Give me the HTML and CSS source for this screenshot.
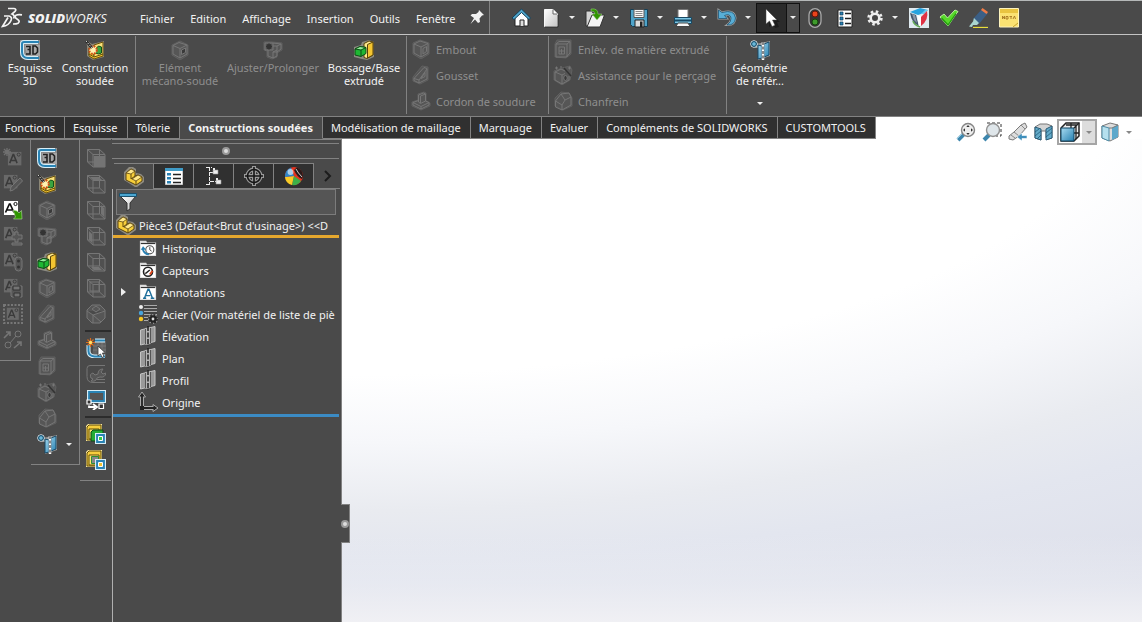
FILE: index.html
```html
<!DOCTYPE html>
<html lang="fr">
<head>
<meta charset="utf-8">
<title>SOLIDWORKS</title>
<meta name="viewport" content="width=device-width, initial-scale=1">
<link rel="stylesheet" href="styles.css">
</head>
<body>
<svg class="sprite" aria-hidden="true">
  <defs>
    <linearGradient id="g-blue" x1="0" y1="0" x2="1" y2="1"><stop offset="0" stop-color="#a9dcf2"/><stop offset="1" stop-color="#2680b0"/></linearGradient>
    <linearGradient id="g-grey" x1="0" y1="0" x2="1" y2="1"><stop offset="0" stop-color="#fff"/><stop offset="1" stop-color="#c4c4c4"/></linearGradient>
  </defs>
  <symbol id="i-sk3d" viewBox="0 0 20 20"><path d="M0 0h20v20H6L0 14z" fill="#8c8c8c"/><path d="M18 2H4q-2 0-2 2v8q0 6 6 6h10" fill="none" stroke="#d8eef7" stroke-width="4"/><path d="M19 2H4q-2 0-2 2v8q0 6 6 6h11" fill="none" stroke="#2a84b5" stroke-width="2"/><path d="M5 5h15v11H7z" fill="#a5a5a5"/><path d="M6 6.5h4v3H7.500M10 9.500v4.500H6M13 6v8h2.500l2-2V8l-2-2z" fill="none" stroke="#222" stroke-width="1.600"/></symbol>
  <symbol id="i-weld" viewBox="0 0 20 20"><path d="M1 0l6 4 12-3v16l-11 3-6-4V6z" fill="#8b8777"/><path d="M4 8l5 2v8l-5-3z" fill="#f4d23c" stroke="#5d4708"/><path d="M9 5l9-3v12l-9 4z" fill="#fbe27a" stroke="#6b520b"/><path d="M9 17l9-3v2l-9 3-5-3v-2z" fill="#f2c431" stroke="#6b520b"/><path d="M10.500 13V9l3-3 3 1v6l-3 1z" fill="#3ba53f" stroke="#12511a"/><circle cx="8" cy="10" r="3.800" fill="#fff3b0" stroke="#cf4c15" stroke-width="2" stroke-dasharray="1.800 1.200"/><path d="M1 1l6 7" stroke="#222" stroke-width="2.600"/><path d="M1 1l6 7" stroke="#ddd" stroke-dasharray="1.500 1"/></symbol>
  <symbol id="i-member" viewBox="0 0 20 20"><path d="M10 1l8 4v10l-8 5-8-5V5z" class="df dh"/><path d="M3 5.500l6-3 8 2.500v9l-7 4-7-4zM3 5.500l7 3 7-3.500M10 8.500V18" class="dl"/><path d="M11.500 10l4-2v4.500l-4 2z" class="dk"/></symbol>
  <symbol id="i-trim" viewBox="0 0 20 20"><path d="M1 2h8l10 1v7l-5 3v4l-5 2-5-2v-6L1 10z" class="df dh"/><path d="M2 3h8v7H2zM10 3l8 1v5l-4 3h-4M14 6l4-2M10 6h4v6M5 10v6l5 2v-6M10 18l4-2v-4M10 12l4-2" class="dl"/><path d="M4 4.500l4 4M8 4.500l-4 4M6 3.500v6M3 6.500h6" class="dk2"/></symbol>
  <symbol id="i-extrude" viewBox="0 0 20 20"><path d="M8 2l7-2 5 2v15l-7 3-5-1-8-2V7l7-2z" fill="#8b8a80"/><path d="M10 3.500l5-2.500 4 1v13l-6 3.500-3-1z" fill="#ffe98c" stroke="#58430a"/><path d="M13.500 4.500L19 2v13l-5.500 3z" fill="#f4c531" stroke="#58430a"/><path d="M1 9l5-2.500 6 1v6l-5 3-6-1.500z" fill="#1fb733" stroke="#0c4d14"/><path d="M1 9l5-2.500 6 1L7 10z" fill="#91f09a" stroke="#0c4d14"/><path d="M7 10v6" stroke="#0c4d14"/></symbol>
  <symbol id="i-endcap" viewBox="0 0 20 20"><path d="M9 1l9 3v11l-8 5-8-5V4z" class="df dh"/><path d="M3 5l6-3 8 2.500v9.500l-7 4-7-4zM3 5l7 3 7-3.500M10 8v10M12 9.500l3.500-2v5l-3.500 2.500z" class="dl"/></symbol>
  <symbol id="i-gusset" viewBox="0 0 20 20"><path d="M11 1l6 1v13l-8 4-7-3v-4z" class="df dh"/><path d="M13 2.500L3 13.500v2l5 2.500 8-4V3.500zM8 18v-3l8-11M3 13.500l5 1.500M10 13.500l4-6v4z" class="dl"/></symbol>
  <symbol id="i-bead" viewBox="0 0 20 20"><path d="M7 3l6-2 2 1v8l4 2v3l-9 4-9-4v-4l6-2z" class="df dh"/><path d="M7.500 4l5-2 2 1v7l-5 2.500-2-1.500zM9.500 5l5-2M9.500 5v7M7.500 9.500L2 11.500V14l8 4 8-4v-2.500l-3.500-1.500M2 11.500l8 4 8-4M10 15.500V18" class="dl"/></symbol>
  <symbol id="i-cut" viewBox="0 0 20 20"><path d="M4 1h14v14l-5 4-11-1V5z" class="df dh"/><path d="M3 5l3-2.500h11V14l-3.500 4H3zM3 5h11v13M14 5l3-2.500M6 8h5.500v7H6zM8.500 10v5M6 12h5" class="dl"/></symbol>
  <symbol id="i-hole" viewBox="0 0 20 20"><path d="M9 3l8-2 2 4-2 10-8 5-8-5V6z" class="df dh"/><path d="M2 7l6-3 4 2M2 7v8l7 4 7-4v-4M2 7l7 3v9M9 10l3-1.500" class="dl"/><ellipse cx="12.500" cy="13" rx="1.800" ry="2.500" class="dk"/><path d="M11 3l7 8" class="dk2"/><path d="M2 3h3M3.500 1.500v3M7 2h2M15 3h3M16.500 1.500v3" class="dl"/></symbol>
  <symbol id="i-chamfer" viewBox="0 0 20 20"><path d="M8 1l8 1 3 5v8l-9 4-8-4V7z" class="df dh"/><path d="M2.500 10L8 3l8-1 2 4-6 3-3 5v5l-6.500-3zM9 14l-6.500-4M12 9L8 3M18 6v8l-9 5" class="dl"/></symbol>
  <symbol id="i-geom" viewBox="0 0 20 20"><path d="M6 4l14-3v15L8 20V8L5 8z" fill="#9a9a9a"/><circle cx="4" cy="4" r="3.300" fill="#56a9cf" stroke="#d8d8d8"/><circle cx="4" cy="4" r="2.400" fill="#6bb9da" stroke="#11435f"/><path d="M8 5l4 1v12l-4 1zM14 4l5-2v13l-5 2z" fill="url(#g-blue)" stroke="#174966"/><path d="M13 2v18" stroke="#fff" stroke-width="2.500"/><path d="M13 2v18" stroke="#111" stroke-dasharray="3 1.500"/></symbol>

  <symbol id="i-logo" viewBox="0 0 22 22"><g fill="none" stroke="#f4f4f4" stroke-width="1.700"><path d="M7 1.500h6q3 .5 1 3L11 7q3.500 1.500 1.500 4.500"/><path d="M3 9h5q3.500 1 2 4.500Q8 18.500 1.500 19.500L7 10.500"/><path d="M21 7.800q-6.500-.8-7 1.700 0 1.500 2.700 3 2.800 2 .3 3.700-1.500.8-5 .8"/></g></symbol>
  <symbol id="i-pin" viewBox="0 0 16 16"><path d="M10 1l5 5-2 .5-2.500 3L11 13l-2 1-3-3.500-4.500 4.500L5 9 1.500 6.500 3 5h4l2.500-2z" fill="#f2f2f2"/></symbol>
  <symbol id="i-home" viewBox="0 0 20 20"><path d="M4 9v9h13V9l-6.500-6z" fill="#fff" stroke="#222"/><path d="M10.500 1L1 10l2 1.500 7.500-7 7.500 7 1.500-1.500z" fill="#52a8ce" stroke="#143f58"/><path d="M9 18v-6h4v6" fill="#ddd" stroke="#222"/></symbol>
  <symbol id="i-new" viewBox="0 0 16 20"><path d="M1.500 1.500h8.500l4.500 4.500v12.500h-13z" fill="url(#g-grey)" stroke="#f8f8f8"/><path d="M10 1.500V6h4.500" fill="#fff" stroke="#666"/><path d="M2 19h13V7" fill="none" stroke="#2b2b2b"/></symbol>
  <symbol id="i-open" viewBox="0 0 20 20"><path d="M1 3h6l1 2h5v4L4 18H1z" fill="#d4d4d4" stroke="#333"/><path d="M7 7h12.500l-4.500 12H2z" fill="#f3f3f3" stroke="#333"/><path d="M6 1q7-1 7 5h4l-5 6-5-6h3q0-3-4-3z" fill="#319400" stroke="#a5cf90" stroke-width=".5"/></symbol>
  <symbol id="i-save" viewBox="0 0 20 20"><path d="M1.500 1.500h17v17h-15l-2-2z" fill="#4fa3c9" stroke="#163f55"/><path d="M5 1.500h10v8H5z" fill="#f8f8f8" stroke="#555"/><path d="M6.500 3.500h7M6.500 5.500h7M6.500 7.500h7" stroke="#888"/><path d="M6 12h9v7H6z" fill="#dcdcdc" stroke="#222"/><path d="M11 13.500h2.500V19H11z" fill="#222"/></symbol>
  <symbol id="i-print" viewBox="0 0 20 20"><path d="M5 1.500h10V10H5z" fill="#fff" stroke="#777"/><path d="M1.500 9.500h17v6h-17z" fill="#7bc4e2" stroke="#174863"/><path d="M2 12.500h16" stroke="#174863" stroke-width="2"/><path d="M5 15l-2 3.500h14L15 15z" fill="#f8f8f8" stroke="#444"/></symbol>
  <symbol id="i-undo" viewBox="0 0 20 20"><path d="M1.500 2v8.500H10L7.500 7.500Q13 5 14 10q.5 4-4 7 8 .5 8.500-7Q17.500 1 5 4.500z" fill="#3b9acb" stroke="#a5a5a5" stroke-width="2"/><path d="M1.500 2v8.500H10L7.500 7.500Q13 5 14 10q.5 4-4 7 8 .5 8.500-7Q17.500 1 5 4.500z" fill="#58aed6" stroke="#1d5575" stroke-width=".8"/></symbol>
  <symbol id="i-cursor" viewBox="0 0 16 20"><path d="M5 4v15l4-3 2 4 4-1-2-5h3z" fill="#000" opacity=".35"/><path d="M2 1v15l3.500-3 2.500 5.500 3-1.300L8.500 12H13z" fill="#fff" stroke="#444" stroke-width=".5"/></symbol>
  <symbol id="i-traffic" viewBox="0 0 14 20"><rect x="1" y=".7" width="12" height="18.600" rx="6" fill="#333" stroke="#aaa" stroke-width="1.300"/><circle cx="7" cy="6" r="3" fill="#e8431c" stroke="#6a1305"/><circle cx="7" cy="14" r="3" fill="#3f9b2c" stroke="#12450a"/></symbol>
  <symbol id="i-list" viewBox="0 0 16 20"><path d="M1 2h14v17H1z" fill="#fff" stroke="#222"/><path d="M3 4h3v3H3zM3 9h3v3H3zM3 14h3v3H3z" fill="#2980b3" stroke="#113d5a" stroke-width=".7"/><path d="M8 5.500h6M8 10.500h6M8 15.500h6" stroke="#222" stroke-width="1.300"/></symbol>
  <symbol id="i-gear" viewBox="0 0 18 18"><circle cx="9" cy="9" r="6.400" fill="none" stroke="#eee" stroke-width="2.600" stroke-dasharray="2.500 2.526"/><circle cx="9" cy="9" r="4.300" fill="#444" stroke="#eee" stroke-width="2.600"/></symbol>
  <symbol id="i-color" viewBox="0 0 20 20"><path d="M0 0h20v20H0z" fill="#dfeaf0"/><path d="M1 4l10-4 8 2-7 4-3 1z" fill="#27a3df"/><path d="M12 6l4-4 3 0-4 4z" fill="#6cc6ee"/><path d="M1 5l6 2q1 5 3 11-7-2-9-13z" fill="#44566c"/><path d="M3 6l3 1 2 8-3-3z" fill="#8b97a6"/><path d="M12 9l6-6q2 9-6 15z" fill="#df3245"/><path d="M8 7l4 1v9l-2 2z" fill="#fff"/><path d="M4 13q1 4 7 6" stroke="#64a955" stroke-width="1.600" fill="none"/></symbol>
  <symbol id="i-check" viewBox="0 0 20 20"><path d="M1 9l4-3 3.500 4L16 2l3 1.500-3 4L9 18z" fill="#57d92a" stroke="#b9ef9f"/><path d="M2.500 10l6.500 7 8-11.500" stroke="#239b0d" stroke-width="1.300" fill="none"/></symbol>
  <symbol id="i-pen" viewBox="0 0 20 20"><path d="M13 1l6 4-9 11-6-5z" fill="#3b5f86"/><path d="M13.500 0l5.500 4-1.500 2L12 2z" fill="#f07b45"/><path d="M5 10l5 5-2 2H4l-1 2-3-.5 4-5z" fill="#a9d5d0"/><path d="M4 19.500h15" stroke="#e8dd3b" stroke-width="1.300"/></symbol>
  <symbol id="i-note" viewBox="0 0 20 20"><path d="M.5.500h19V19H.5z" fill="#fbe272" stroke="#fdf3bd"/><path d="M1 1h18v4H1z" fill="#e9c440"/><path d="M3.500 11V8l2 3V8M7 8.500h2V11H7zM10.500 8.500h2.500M12 8.500V11M14 11l1.500-3 1 3" fill="none" stroke="#a57621" stroke-width=".9"/><path d="M14 19l5-4" stroke="#c5a12a"/></symbol>

  <symbol id="p-note" viewBox="0 0 20 20"><path d="M1 1h15v15H1z" fill="#696969"/><path d="M3 13.500L6.800 4h.6l3.800 9.500M4.500 10.500h5" fill="none" stroke="#3a3a3a" stroke-width="1.700"/><circle cx="13" cy="4" r="1.700" fill="none" stroke="#3a3a3a"/></symbol>
  <symbol id="i-n-new" viewBox="0 0 20 20"><use href="#p-note" x="4" y="3" width="18" height="18"/><path d="M4 0v8M0 4h8M1 1l6 6M7 1L1 7" stroke="#707070" stroke-width="1.300"/></symbol>
  <symbol id="i-n-edit" viewBox="0 0 20 20"><use href="#p-note" width="18" height="18"/><path d="M7 17l1-4 9-9 2.500 3-9 9z" class="df dl2"/></symbol>
  <symbol id="i-n-insert" viewBox="0 0 20 20"><path d="M1 1h14v14H1z" fill="#fff"/><path d="M2.500 12.500L6.400 4h.7l3.900 8.500M4 10h5" fill="none" stroke="#111" stroke-width="1.700"/><circle cx="12.500" cy="4" r="1.600" fill="none" stroke="#111"/><path d="M10 10l4 1 2 2 2.500-2.500.5 8.500h-8.500l2-2z" fill="#2f9500" stroke="#b2d99d" stroke-width=".6"/></symbol>
  <symbol id="i-n-plus" viewBox="0 0 20 20"><use href="#p-note" width="18" height="18"/><path d="M12 6h3v3h4v4h-4v3h-3v-3H9V9h3zM9 17h10v2H9z" class="df dl2"/></symbol>
  <symbol id="i-n-link" viewBox="0 0 20 20"><use href="#p-note" width="18" height="18"/><rect x="12" y="5" width="7" height="14" rx="3.500" class="df dl2"/><circle cx="15.500" cy="9" r="1.500" fill="#333"/><circle cx="15.500" cy="15" r="1.500" fill="#333"/></symbol>
  <symbol id="i-n-save" viewBox="0 0 20 20"><use href="#p-note" width="18" height="18"/><path d="M8 8h11v11H9l-1-1z" class="df dl2"/><path d="M10 8h7v4h-7zM11 15h6v4h-6z" fill="#737373" stroke="#333"/></symbol>
  <symbol id="i-n-frame" viewBox="0 0 20 20"><path d="M1 1h18v18H1z" fill="none" stroke="#777" stroke-dasharray="2 1.500" stroke-width="2"/><use href="#p-note" x="3" y="3" width="16" height="16"/></symbol>
  <symbol id="i-balloon" viewBox="0 0 20 20"><g class="dl"><path d="M1 8l6-6M3 2h4v4M11 18l7-6M18 16v-4h-4" stroke-width="1.600"/><circle cx="15" cy="4" r="3"/><circle cx="5" cy="15" r="3"/><path d="M13 6l-6 7"/></g></symbol>

  <symbol id="p-cube" viewBox="0 0 20 20"><path d="M1 1h13l5 5v13H7l-6-5z" fill="#505050"/><path d="M1.500 1.500h12l5.500 5v12.500H7l-5.500-5zM1.500 1.500l5.500 5h12M7 6.500v12.500M13.500 1.500v12.500M1.500 14h12l5.500 5" class="dl"/></symbol>
  <symbol id="i-c1" viewBox="0 0 20 20"><use href="#p-cube"/><path d="M8 8h11v11H8z" fill="#747474"/></symbol>
  <symbol id="i-c2" viewBox="0 0 20 20"><use href="#p-cube"/><path d="M4 3h9l3 3H7z" fill="#747474"/></symbol>
  <symbol id="i-c3" viewBox="0 0 20 20"><use href="#p-cube"/><path d="M15 5l3 3v9l-3-3z" fill="#747474"/></symbol>
  <symbol id="i-c4" viewBox="0 0 20 20"><use href="#p-cube"/><path d="M3 5l3 3v9l-3-3z" fill="#747474"/></symbol>
  <symbol id="i-c5" viewBox="0 0 20 20"><use href="#p-cube"/><path d="M5 15h8l3 3H8z" fill="#747474"/></symbol>
  <symbol id="i-c6" viewBox="0 0 20 20"><use href="#p-cube"/><path d="M4 4h9v9H4z" fill="none" stroke="#747474"/></symbol>
  <symbol id="i-c7" viewBox="0 0 20 20"><path d="M6 1h8l5 5v8l-5 5H6l-5-5V6zM1 7l6 4 12-4M7 11v8M7 11l8 7M6 5l4-3 4 3-4 3z" class="df dl2"/></symbol>
  <symbol id="i-sk-cur" viewBox="0 0 20 20"><path d="M8 3h12v16H6z" fill="#626262"/><path d="M12 3v15M16 3v15M7 8h13M7 12h13" stroke="#777"/><path d="M9 2.500h10M2.500 7v6q0 5 6 5.500H19" fill="none" stroke="#d8eef7" stroke-width="4"/><path d="M9 2.500h10M2.500 7v6q0 5 6 5.500H19" fill="none" stroke="#2a84b5" stroke-width="2"/><path d="M4.500 0v9M0 4.500h9M1.500 1.500l6 6M7.500 1.500l-6 6" stroke="#d96b1c" stroke-width="1.200"/><circle cx="4.500" cy="4.500" r="1.700" fill="#ffe36b"/><path d="M12 8v10l2.500-2 1.500 3.500 2-1-1.500-3.500h3z" fill="#fff" stroke="#333" stroke-width=".8"/></symbol>
  <symbol id="i-wrench" viewBox="0 0 20 20"><path d="M19 1.500H4q-3 0-3 3v8q0 6 6 6h12M19 15.500H8" class="dl"/><path d="M5 14q-2-4 2-5l2 2 3-1q0-5 5-5l-2 3 2 2 3-1q-1 5-6 4l-3 1q-1 4-6 3l2-2z" class="df dl2"/></symbol>
  <symbol id="i-rect" viewBox="0 0 20 20"><path d="M2 1h17v11H2z" fill="#555" stroke="#d8eef7" stroke-width="2"/><path d="M3 2h15v9H3z" fill="none" stroke="#2a84b5" stroke-width="1.800"/><path d="M1 10h4v4H1zM13 14h4.500v4.500H13z" fill="#333" stroke="#fff" stroke-width="1.200"/><path d="M3 15.500V17h6M7 14l4 3-4 3" fill="none" stroke="#fff" stroke-width="1.800"/></symbol>
  <symbol id="p-off" viewBox="0 0 20 20"><path d="M0 2l2-2h14v15l-2 2H0z" fill="#f9e69a"/><path d="M1 3l2-2h12v12l-2 3H1z" fill="#f6ce3d" stroke="#5e4a0a"/><path d="M3 5h10v10H3z" fill="#ffe674" stroke="#5e4a0a"/></symbol>
  <symbol id="p-sq" viewBox="0 0 10 10"><path d="M.5.500h9v9h-9z" fill="#2a84b5" stroke="#d8eef7"/></symbol>
  <symbol id="i-off1" viewBox="0 0 20 20"><use href="#p-off"/><path d="M5 8l2-2h10v9l-2 2H5z" fill="#23ad35" stroke="#0d4a15"/><use href="#p-sq" x="9" y="9" width="11" height="11"/><path d="M12.500 12.500h4v4h-4z" fill="#37cc45" stroke="#fff"/></symbol>
  <symbol id="i-off2" viewBox="0 0 20 20"><use href="#p-off"/><path d="M5.500 6.500h7v7h-7z" fill="#888" stroke="#2c8f35"/><use href="#p-sq" x="9" y="9" width="11" height="11"/><path d="M12.500 12.500h4v4h-4z" fill="#f2c431" stroke="#fff"/></symbol>

  <symbol id="i-part" viewBox="0 0 20 20"><path d="M5 0h4l3 2v4l5 1 3 3v5l-7 5h-2L0 13V5z" fill="#8f8b80"/><path d="M2 6l5-4 4 2v5l3-1 4 2v4l-6 4-10-5z" fill="#f8cf3b" stroke="#5c4611"/><path d="M2 6l5-4 4 2-4 3zM8 12l6-4 4 2-6 4z" fill="#ffe88a" stroke="#5c4611" stroke-width=".8"/><path d="M7 7v5l4-3M12 14v4" stroke="#5c4611" fill="none"/></symbol>
  <symbol id="i-props" viewBox="0 0 20 20"><path d="M1.500 2.500h17v16h-17z" fill="#fff" stroke="#ccc"/><path d="M1 2h18v3H1z" fill="#3f9bc7"/><path d="M3 7h4v2.500H3zM3 11h4v2.500H3zM3 15h4v2.500H3z" fill="#2980b3"/><path d="M9 8.500h8M9 12.500h8M9 16.500h8" stroke="#222" stroke-width="1.500"/></symbol>
  <symbol id="i-config" viewBox="0 0 20 20"><path d="M5.500 1v18M6 6.500h4M6 15.500h7M2 1.500h6M2 18.500h4" stroke="#eee" stroke-dasharray="4 1" fill="none"/><path d="M9 4h5v4H9zM12 14h5v4h-5z" fill="#eee" stroke="#999" stroke-width=".6"/><path d="M9 2h2v2H9zM12 12h2v2h-2z" fill="#eee"/></symbol>
  <symbol id="i-target" viewBox="0 0 20 20"><circle cx="10" cy="10" r="6.500" fill="none" stroke="#9a9a9a" stroke-width="4"/><path d="M10 0v20M0 10h20" stroke="#9a9a9a" stroke-width="4"/><circle cx="10" cy="10" r="6.500" fill="none" stroke="#161616" stroke-width="1.600"/><path d="M10 1v18M1 10h18" stroke="#161616" stroke-width="1.600"/></symbol>
  <symbol id="i-ball" viewBox="0 0 20 20"><circle cx="10" cy="10" r="9" fill="#e33420"/><path d="M10 10L1 11a9 9 0 007 8z" fill="#f8cb26"/><path d="M10 10L8 19a9 9 0 009-4z" fill="#3db049"/><path d="M10 10L1 11A9 9 0 017 1.500z" fill="#2b86c8"/><path d="M10 4l3-2.500q6 2.500 6 8.500l-1 3q-5-2-8-9z" fill="#2a1a1a"/><path d="M12 3q2 4 6 8" stroke="#ccc" fill="none"/><circle cx="6.500" cy="6" r="3" fill="#fff" opacity=".6"/></symbol>
  <symbol id="i-filter" viewBox="0 0 20 20"><path d="M2 4h16l-6 7v6l-3 2v-8z" fill="url(#g-grey)" stroke="#333"/><path d="M1.500 1.500h17v3h-17z" fill="#4aa5d0" stroke="#1c526f"/></symbol>
  <symbol id="p-folder" viewBox="0 0 20 20"><path d="M1 2h7l1 2h10v15H1z" fill="#ddd"/><path d="M2 6h16v12H2z" fill="#fff"/><path d="M2 5h16" stroke="#333" stroke-width="1.200"/></symbol>
  <symbol id="i-hist" viewBox="0 0 20 20"><use href="#p-folder"/><circle cx="12" cy="12" r="4.500" fill="#fff" stroke="#555" stroke-width="1.200"/><path d="M12 9v3l2 1.500" stroke="#333" fill="none"/><path d="M4 11q2 6 7 6" stroke="#2980b3" stroke-width="2" fill="none"/><path d="M2 12l2.500-4L8 12z" fill="#2980b3"/></symbol>
  <symbol id="i-sensor" viewBox="0 0 20 20"><use href="#p-folder"/><circle cx="10" cy="12" r="5" fill="#fff" stroke="#222" stroke-width="1.800"/><path d="M7 14l5-4" stroke="#222" stroke-width="1.500"/><path d="M12 15l3-4" stroke="#e2471c" stroke-width="2"/></symbol>
  <symbol id="i-annot" viewBox="0 0 20 20"><use href="#p-folder"/><path d="M6 17L10 7h1l4 10M7.500 14h5M4.500 17h3.500M13 17h4" fill="none" stroke="#1f6f9c" stroke-width="1.600"/></symbol>
  <symbol id="i-mat" viewBox="0 0 20 20"><path d="M6 3h13M6 9h13M6 15h6" stroke="#aaa" stroke-width="4"/><path d="M6 3h13M6 9h13M6 15h6" stroke="#222" stroke-width="1.600"/><circle cx="3" cy="3" r="2" fill="#eee"/><circle cx="3" cy="9" r="2.200" fill="#48a4dc"/><circle cx="3" cy="15" r="2.200" fill="#f6c623"/><circle cx="15" cy="15" r="5" fill="#999"/><circle cx="15" cy="15" r="2.600" fill="#ddd" stroke="#222" stroke-width="2.400"/><circle cx="15" cy="15" r="4.200" fill="none" stroke="#222" stroke-width="1.500" stroke-dasharray="1.900 1.400"/></symbol>
  <symbol id="i-plane" viewBox="0 0 20 20"><path d="M2.500 4L17 .5v15L2.500 19z" fill="#999" stroke="#c4c4c4"/><path d="M7.500 2l5-1v17l-5 1z" fill="#b5b5b5"/><path d="M10 0v20" stroke="#222" stroke-width="1.500" stroke-dasharray="5 1.500"/><path d="M7.500 3v15M12.500 2v15" stroke="#555"/></symbol>
  <symbol id="i-origin" viewBox="0 0 20 20"><path d="M4 4v12h12" fill="none" stroke="#aaa" stroke-width="4"/><path d="M4 0L.5 5h7zM20 16l-5-3.500v7z" fill="#222" stroke="#aaa"/><path d="M4 3v13h13" fill="none" stroke="#222" stroke-width="1.800"/><path d="M2 14h4v4H2z" fill="#222"/></symbol>

  <symbol id="i-zoomfit" viewBox="0 0 20 20"><path d="M8 12l-6 6" stroke="#3d86ad" stroke-width="4"/><path d="M7 11l-6 6" stroke="#8ec8e2"/><circle cx="12" cy="8" r="6.500" fill="#eee" stroke="#858585" stroke-width="1.400"/><path d="M12 3l1.700 2h-3.400zM12 13l1.700-2h-3.400zM7 8l2-1.700v3.400zM17 8l-2-1.700v3.400z" fill="#333"/></symbol>
  <symbol id="i-zoomarea" viewBox="0 0 20 20"><path d="M5 1h14v13h-5" fill="none" stroke="#333" stroke-dasharray="3 2"/><path d="M7 13l-5 5" stroke="#3d86ad" stroke-width="4"/><circle cx="11" cy="8" r="6.500" fill="#dfe6ea" stroke="#909090" stroke-width="1.400"/></symbol>
  <symbol id="i-prev" viewBox="0 0 20 20"><path d="M13 3l4-2 2 4-8 9-6 4-4-1v-3l5-4z" fill="#ddd" stroke="#7a7a7a"/><path d="M13 3l4 4M6 10l5 4M3 13l4 3" stroke="#888"/><path d="M9 15l5-4v2.500h5v3h-5V19z" fill="#3f8fbb" stroke="#fff" stroke-width=".6"/></symbol>
  <symbol id="i-section" viewBox="0 0 20 20"><path d="M1 5l5-3h7l5 2v12l-4 1-2-1V9H7v9l-6-2z" fill="#d4d4d4" stroke="#777"/><path d="M1 5l6 2v11l-6-2zM12 7l6-3v12l-6 2z" fill="#64abc9" stroke="#2b5d78"/><path d="M1 10l4-3M1 14l6-5M3 17l4-4M12 11l6-5M12 15l6-5" stroke="#215a78" stroke-width=".8"/></symbol>
  <symbol id="i-orient" viewBox="0 0 20 20"><path d="M1 6l5-5h13v13l-5 5H1z" fill="#eee" stroke="#222" stroke-width="1.500"/><path d="M14 6l5-5M11 1v5M6 3h11M16 4v13M14 11h5" stroke="#222" stroke-width="1.300"/><path d="M1 6h13v13H1z" fill="url(#g-blue)" stroke="#0f4462"/></symbol>
  <symbol id="i-style" viewBox="0 0 20 20"><path d="M2 4l8-3 8 2v12l-8 4-8-3z" fill="#ddd" stroke="#777"/><path d="M2 4l7 2v13l-7-3z" fill="#b5e0ee" stroke="#4f8ba5"/><path d="M12 6l6-3v12l-6 3z" fill="#5da8cb"/><path d="M9 6h3l6-3" fill="none" stroke="#777"/></symbol>
</svg>

<header class="topbar">
  <div class="brand"><svg class="logo" aria-hidden="true"><use href="#i-logo"/></svg><span class="brand-name"><b>SOLID</b>WORKS</span></div>
  <nav class="menu">
    <button>Fichier</button><button>Edition</button><button>Affichage</button><button>Insertion</button><button>Outils</button><button>Fenêtre</button>
    <button class="pin" aria-label="Épingler"><svg class="s16"><use href="#i-pin"/></svg></button>
  </nav>
  <div class="quick">
    <button class="q home" aria-label="Accueil"><svg class="s20"><use href="#i-home"/></svg></button>
    <button class="q split" aria-label="Nouveau"><svg class="s20"><use href="#i-new"/></svg><i class="caret"></i></button>
    <button class="q split" aria-label="Ouvrir"><svg class="s20"><use href="#i-open"/></svg><i class="caret"></i></button>
    <button class="q split" aria-label="Enregistrer"><svg class="s20"><use href="#i-save"/></svg><i class="caret"></i></button>
    <button class="q split" aria-label="Imprimer"><svg class="s20"><use href="#i-print"/></svg><i class="caret"></i></button>
    <button class="q split" aria-label="Annuler"><svg class="s20"><use href="#i-undo"/></svg><i class="caret"></i></button>
    <div class="select-tool"><button class="sel-main" aria-label="Sélectionner"><svg class="s20"><use href="#i-cursor"/></svg></button><button class="sel-more" aria-label="Modes de sélection"><i class="caret"></i></button></div>
    <button class="q q-end" aria-label="Reconstruire"><svg class="s20"><use href="#i-traffic"/></svg></button>
    <button class="q q-end" aria-label="Propriétés du fichier"><svg class="s20"><use href="#i-list"/></svg></button>
    <button class="q split" aria-label="Options"><svg class="s18"><use href="#i-gear"/></svg><i class="caret"></i></button>
    <button class="q q-end" aria-label="Couleurs"><svg class="s20"><use href="#i-color"/></svg></button>
    <button class="q q-end" aria-label="Valider"><svg class="s20"><use href="#i-check"/></svg></button>
    <button class="q q-end" aria-label="Surligner"><svg class="s20"><use href="#i-pen"/></svg></button>
    <button class="q q-end" aria-label="Note"><svg class="s20"><use href="#i-note"/></svg></button>
  </div>
</header>

<section class="ribbon" aria-label="Constructions soudées">
  <div class="group g1">
    <button class="big"><svg class="s20"><use href="#i-sk3d"/></svg><span>Esquisse<br>3D</span></button>
    <button class="big"><svg class="s20"><use href="#i-weld"/></svg><span>Construction<br>soudée</span></button>
  </div>
  <div class="group g2">
    <button class="big" disabled><svg class="s20"><use href="#i-member"/></svg><span>Elément<br>mécano-soudé</span></button>
    <button class="big" disabled><svg class="s20"><use href="#i-trim"/></svg><span>Ajuster/Prolonger</span></button>
    <button class="big"><svg class="s20"><use href="#i-extrude"/></svg><span>Bossage/Base<br>extrudé</span></button>
  </div>
  <div class="group list g3">
    <button disabled><svg class="s20"><use href="#i-endcap"/></svg>Embout</button>
    <button disabled><svg class="s20"><use href="#i-gusset"/></svg>Gousset</button>
    <button disabled><svg class="s20"><use href="#i-bead"/></svg>Cordon de soudure</button>
  </div>
  <div class="group list g4">
    <button disabled><svg class="s20"><use href="#i-cut"/></svg>Enlèv. de matière extrudé</button>
    <button disabled><svg class="s20"><use href="#i-hole"/></svg>Assistance pour le perçage</button>
    <button disabled><svg class="s20"><use href="#i-chamfer"/></svg>Chanfrein</button>
  </div>
  <div class="group g5">
    <button class="big"><svg class="s20"><use href="#i-geom"/></svg><span>Géométrie<br>de référ...</span><i class="caret"></i></button>
  </div>
</section>

<div class="tabs" role="tablist">
  <button role="tab">Fonctions</button><button role="tab">Esquisse</button><button role="tab">Tôlerie</button><button role="tab" class="on" aria-selected="true">Constructions soudées</button><button role="tab">Modélisation de maillage</button><button role="tab">Marquage</button><button role="tab">Evaluer</button><button role="tab">Compléments de SOLIDWORKS</button><button role="tab">CUSTOMTOOLS</button>
</div>

<main class="work">
  <aside class="dock">
    <div class="bar">
      <button disabled aria-label="Nouvelle note"><svg class="s20"><use href="#i-n-new"/></svg></button>
      <button disabled aria-label="Modifier la note"><svg class="s20"><use href="#i-n-edit"/></svg></button>
      <button aria-label="Insérer une note"><svg class="s20"><use href="#i-n-insert"/></svg></button>
      <button disabled aria-label="Ajouter ou retirer"><svg class="s20"><use href="#i-n-plus"/></svg></button>
      <button disabled aria-label="Lier la note"><svg class="s20"><use href="#i-n-link"/></svg></button>
      <button disabled aria-label="Enregistrer la note"><svg class="s20"><use href="#i-n-save"/></svg></button>
      <button disabled aria-label="Cadre de note"><svg class="s20"><use href="#i-n-frame"/></svg></button>
      <button disabled aria-label="Bulles"><svg class="s20"><use href="#i-balloon"/></svg></button>
    </div>
    <div class="bar wide">
      <button aria-label="Esquisse 3D"><svg class="s20"><use href="#i-sk3d"/></svg></button>
      <button aria-label="Construction soudée"><svg class="s20"><use href="#i-weld"/></svg></button>
      <button disabled aria-label="Elément mécano-soudé"><svg class="s20"><use href="#i-member"/></svg></button>
      <button disabled aria-label="Ajuster/Prolonger"><svg class="s20"><use href="#i-trim"/></svg></button>
      <button aria-label="Bossage/Base extrudé"><svg class="s20"><use href="#i-extrude"/></svg></button>
      <button disabled aria-label="Embout"><svg class="s20"><use href="#i-endcap"/></svg></button>
      <button disabled aria-label="Gousset"><svg class="s20"><use href="#i-gusset"/></svg></button>
      <button disabled aria-label="Cordon de soudure"><svg class="s20"><use href="#i-bead"/></svg></button>
      <button disabled aria-label="Enlèvement de matière"><svg class="s20"><use href="#i-cut"/></svg></button>
      <button disabled aria-label="Assistance pour le perçage"><svg class="s20"><use href="#i-hole"/></svg></button>
      <button disabled aria-label="Chanfrein"><svg class="s20"><use href="#i-chamfer"/></svg></button>
      <button aria-label="Géométrie de référence"><svg class="s20"><use href="#i-geom"/></svg><i class="caret"></i></button>
    </div>
    <div class="bar third">
      <button disabled aria-label="Face"><svg class="s20"><use href="#i-c1"/></svg></button>
      <button disabled aria-label="Dessus"><svg class="s20"><use href="#i-c2"/></svg></button>
      <button disabled aria-label="Droite"><svg class="s20"><use href="#i-c3"/></svg></button>
      <button disabled aria-label="Gauche"><svg class="s20"><use href="#i-c4"/></svg></button>
      <button disabled aria-label="Dessous"><svg class="s20"><use href="#i-c5"/></svg></button>
      <button disabled aria-label="Arrière"><svg class="s20"><use href="#i-c6"/></svg></button>
      <button disabled aria-label="Isométrique"><svg class="s20"><use href="#i-c7"/></svg></button>
      <hr>
      <button aria-label="Esquisse"><svg class="s20"><use href="#i-sk-cur"/></svg></button>
      <button disabled aria-label="Réparer l'esquisse"><svg class="s20"><use href="#i-wrench"/></svg></button>
      <button aria-label="Convertir"><svg class="s20"><use href="#i-rect"/></svg></button>
      <hr>
      <button aria-label="Bossage-extrusion"><svg class="s20"><use href="#i-off1"/></svg></button>
      <button aria-label="Enlèvement-extrusion"><svg class="s20"><use href="#i-off2"/></svg></button>
    </div>
  </aside>

  <aside class="panel">
    <div class="grip"><i class="dot"></i></div>
    <div class="ptabs" role="tablist">
      <button role="tab" class="on" aria-label="Arbre de création"><svg class="s20"><use href="#i-part"/></svg></button>
      <button role="tab" aria-label="Propriétés"><svg class="s20"><use href="#i-props"/></svg></button>
      <button role="tab" aria-label="Configurations"><svg class="s20"><use href="#i-config"/></svg></button>
      <button role="tab" aria-label="DimXpert"><svg class="s20"><use href="#i-target"/></svg></button>
      <button role="tab" aria-label="Apparences"><svg class="s20"><use href="#i-ball"/></svg></button>
      <button class="more" aria-label="Suivant"><svg class="s12" viewBox="0 0 12 12"><path d="M4 1l5 5-5 5" fill="none" stroke="#1c1c1c" stroke-width="2"/></svg></button>
    </div>
    <div class="tree-wrap">
      <label class="filter"><svg class="s20"><use href="#i-filter"/></svg><input type="text" aria-label="Filtrer"></label>
      <div class="root"><svg class="s20"><use href="#i-part"/></svg><span>Pièce3 (Défaut&lt;Brut d'usinage&gt;) &lt;&lt;D</span></div>
      <ul class="tree">
        <li><svg class="s18"><use href="#i-hist"/></svg><span>Historique</span></li>
        <li><svg class="s18"><use href="#i-sensor"/></svg><span>Capteurs</span></li>
        <li class="open"><svg class="s18"><use href="#i-annot"/></svg><span>Annotations</span></li>
        <li><svg class="s20"><use href="#i-mat"/></svg><span>Acier (Voir matériel de liste de piè</span></li>
        <li><svg class="s20"><use href="#i-plane"/></svg><span>Élévation</span></li>
        <li><svg class="s20"><use href="#i-plane"/></svg><span>Plan</span></li>
        <li><svg class="s20"><use href="#i-plane"/></svg><span>Profil</span></li>
        <li><svg class="s20"><use href="#i-origin"/></svg><span>Origine</span></li>
      </ul>
    </div>
  </aside>

  <section class="view" aria-label="Zone graphique">
    <button class="handle" aria-label="Réduire le panneau"><i class="dot"></i></button>
    <div class="hud">
      <button aria-label="Zoom au mieux"><svg class="s20"><use href="#i-zoomfit"/></svg></button>
      <button aria-label="Zoom fenêtre"><svg class="s20"><use href="#i-zoomarea"/></svg></button>
      <button aria-label="Vue précédente"><svg class="s20"><use href="#i-prev"/></svg></button>
      <button aria-label="Vue en coupe"><svg class="s20"><use href="#i-section"/></svg></button>
      <button class="boxed" aria-label="Orientation de vue"><svg class="s20"><use href="#i-orient"/></svg><span><i class="caret"></i></span></button>
      <button class="styleb" aria-label="Style d'affichage"><svg class="s20"><use href="#i-style"/></svg><i class="caret"></i></button>
    </div>
  </section>
</main>
</body>
</html>
```
FILE: styles.css
```css
:root {
  --bg: #4a4a4a;
  --dark: #303030;
  --line: #828282;
  --text: #f2f2f2;
  --muted: #8e8e8e;
}
* { box-sizing: border-box; }
html, body { height: 100%; }
body {
  margin: 0;
  display: flex;
  flex-direction: column;
  overflow: hidden;
  background: var(--bg);
  color: var(--text);
  font: 11px/13px "Noto Sans", "Open Sans", sans-serif;
}
button {
  margin: 0;
  padding: 0;
  border: 0;
  background: none;
  color: inherit;
  font: inherit;
  white-space: nowrap;
}
button:disabled { color: var(--muted); }
svg { display: block; flex: none; }
.sprite { position: absolute; width: 0; height: 0; }
.s12 { width: 12px; height: 12px; }
.s16 { width: 16px; height: 16px; }
.s18 { width: 18px; height: 18px; }
.s20 { width: 20px; height: 20px; }

/* strokes and fills of unavailable commands */
.df { fill: #565656; }
.dh { stroke: #606060; }
.dl { fill: none; stroke: #767676; }
.dl2 { stroke: #767676; }
.dk { fill: #3a3a3a; stroke: #767676; }
.dk2 { fill: none; stroke: #333; stroke-width: 1.5px; }

.caret {
  flex: none;
  width: 0;
  height: 0;
  border: 3px solid transparent;
  border-top-color: #eee;
  border-bottom: 0;
}
.dot {
  display: block;
  width: 8px;
  height: 8px;
  border-radius: 50%;
  background: #ddd;
  border: 2px solid #999;
}

/* title bar */
.topbar {
  display: flex;
  flex: none;
  height: 35px;
  border-top: 1px solid #b5b8b8;
  border-bottom: 1px solid #c4c4c4;
}
.brand { display: flex; align-items: center; width: 132px; padding-left: 1px; }
.logo { width: 22px; height: 22px; }
.brand-name { padding-left: 5px; font: italic 13px/16px "Open Sans", sans-serif; }
.brand-name b { font-weight: 800; }
.menu { display: flex; align-items: center; width: 358px; padding: 2px 4px 0 0; border-right: 1px solid var(--line); }
.menu button { padding: 0 8px; }
.menu .pin { margin-left: auto; padding: 0 0 4px; }
.quick { display: flex; align-items: center; padding-left: 21px; }
.q { display: flex; align-items: center; justify-content: center; height: 28px; }
.home { margin-right: 5px; }
.q-end { width: 30px; }
.split { width: 44px; gap: 8px; }
.select-tool { display: flex; height: 30px; border: 1px solid #111; }
.sel-main { display: flex; align-items: center; justify-content: center; width: 30px; background: #2b2b2b; border-right: 1px solid #111; }
.sel-more { display: flex; align-items: center; justify-content: center; width: 12px; }

/* ribbon */
.ribbon { display: flex; flex: none; height: 81px; padding-top: 1px; }
.group { display: flex; height: 78px; border-right: 1px solid var(--line); }
.group:last-child { border-right: 0; }
.big { display: flex; flex-direction: column; align-items: center; gap: 1px; padding: 4px 0 0; text-align: center; }
.g1 { width: 136px; }
.g1 .big:first-child { width: 60px; }
.g1 .big:last-child { width: 70px; }
.g2 { width: 271px; }
.g2 .big { width: 88px; }
.g2 .big:nth-child(2) { width: 98px; }
.g2 .big:last-child { width: 84px; }
.g3 { width: 142px; }
.g4 { width: 178px; }
.g5 { width: 66px; justify-content: center; }
.g5 .caret { margin-top: 14px; }
.list { flex-direction: column; }
.list button { display: flex; align-items: center; gap: 5px; height: 26px; padding-left: 4px; }

/* command tabs */
.tabs { display: flex; flex: none; height: 23px; background: #fff; border-top: 1px solid var(--line); }
.tabs button { height: 22px; padding: 0 9px 0 8px; background: var(--dark); border-right: 1px solid var(--line); border-bottom: 1px solid var(--line); }
.tabs button:first-child { padding-left: 5px; }
.tabs button.on { background: var(--bg); border-bottom-color: var(--bg); font-weight: 700; }

/* docked toolbars */
.work { display: flex; flex: 1; min-height: 0; }
.dock { display: flex; align-items: flex-start; flex: none; border-top: 1px solid var(--line); }
.bar { display: flex; flex-direction: column; width: 31px; padding: 5px 0 7px; border-right: 1px solid var(--line); border-bottom: 1px solid var(--line); }
.bar button { display: flex; align-items: center; gap: 9px; height: 26px; padding-left: 3px; }
.bar.wide { width: 49px; }
.bar.wide button { padding-left: 6px; }
.bar.third { border-right: 0; }
.bar.third button { padding-left: 6px; }
.bar hr { width: 26px; margin: 3px 0 3px 5px; border: 0; border-top: 2px solid #2c2c2c; }

/* feature tree */
.panel { display: flex; flex-direction: column; flex: none; width: 230px; margin-left: 1px; border-top: 1px solid var(--line); border-right: 1px solid var(--line); }
.grip { display: flex; align-items: center; justify-content: center; height: 16px; margin: 3px 2px 4px 0; border-top: 1px solid var(--line); border-bottom: 1px solid var(--line); }
.ptabs { display: flex; height: 26px; padding-left: 2px; }
.ptabs button { display: flex; align-items: center; justify-content: center; flex: none; width: 40px; background: var(--dark); border: 1px solid var(--line); border-left: 0; }
.ptabs button.on { background: none; border-bottom: 0; }
.ptabs .more { width: 26px; background: none; border-width: 0 0 1px; }
.tree-wrap { flex: 1; padding-right: 2px; border-left: 1px solid #b0b0b0; overflow: hidden; }
.filter { display: flex; align-items: center; height: 26px; margin: 0 3px; padding-left: 1px; background: #555; border: 1px solid #7c7c7c; }
.filter input { flex: 1; min-width: 0; border: 0; background: none; color: inherit; font: inherit; outline: 0; }
.root { display: flex; align-items: center; gap: 3px; height: 23px; padding-left: 3px; border-bottom: 3px solid #e6a82e; overflow: hidden; white-space: nowrap; }
.tree { margin: 0; padding: 0; list-style: none; border-bottom: 3px solid #3b8bc4; }
.tree li { display: flex; align-items: center; height: 22px; padding: 0 0 2px 25px; overflow: hidden; white-space: nowrap; }
.tree svg { margin-right: 4px; }
.tree .s18 { margin-left: 1px; margin-right: 5px; }
.tree .open { padding-left: 8px; }
.tree .open::before { content: ""; width: 0; border: 4px solid transparent; border-left: 5px solid #eee; border-right: 0; margin-right: 12px; }

/* graphics area */
.view {
  position: relative;
  flex: 1;
  background:
    linear-gradient(to top, #f0f0f4 0%, rgba(236, 238, 244, 0.5) 8%, rgba(230, 233, 242, 0) 18%),
    radial-gradient(ellipse 210% 128% at 0 -10%, #fff 46%, #f6f7fa 57%, #e9ebf0 68%, #e3e6ef 76%, #dddfea 94%);
}
.handle { position: absolute; left: -1px; top: calc(76% - 2px); width: 9px; height: 39px; background: var(--bg); border: 1px solid var(--line); border-left: 0; }
.hud { position: absolute; right: 0; top: -21px; display: flex; align-items: center; height: 28px; }
.hud button { display: flex; align-items: center; justify-content: center; width: 26px; height: 26px; }
.hud .caret { border-top-color: #888; }
.hud .boxed { width: 40px; border: 2px solid #a5a5a5; padding-left: 1px; background: #fff; }
.boxed span { display: flex; align-items: center; justify-content: center; flex: 1; height: 22px; margin-left: 2px; background: #ddd; }
.hud .styleb { justify-content: flex-start; width: 45px; gap: 6px; padding-left: 3px; }
```
